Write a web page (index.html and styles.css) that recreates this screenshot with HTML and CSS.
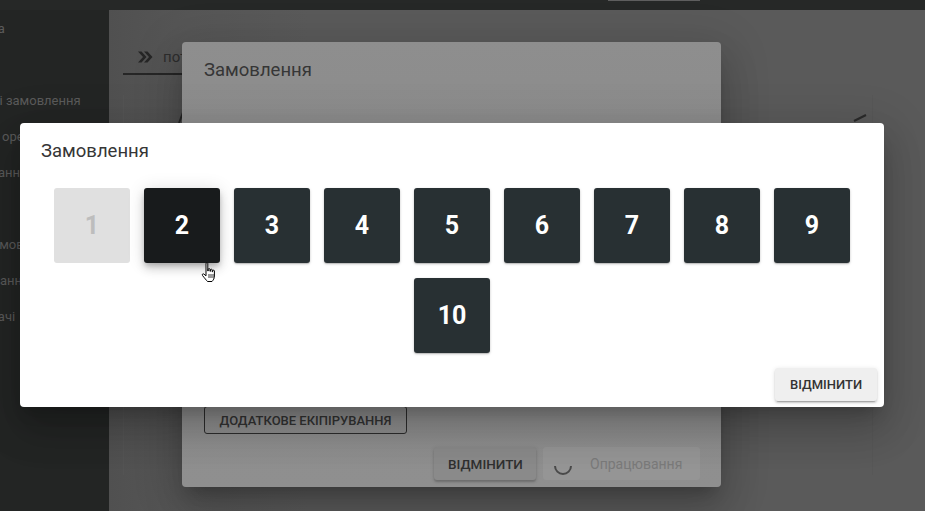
FILE: index.html
```html
<!DOCTYPE html>
<html lang="uk">
<head>
<meta charset="utf-8">
<title>Замовлення</title>
<link rel="stylesheet" href="styles.css">
</head>
<body>
<div class="topbar"><div class="topbar-tab"></div></div>
<div class="app">
  <nav class="sidebar">
    <div class="nav-item">Довідка</div>
    <div class="nav-item">Мапа</div>
    <div class="nav-item">Поточні замовлення</div>
    <div class="nav-item">Заявки оренди</div>
    <div class="nav-item">Скасування</div>
    <div class="nav-item">Водії</div>
    <div class="nav-item">Нові замовлення</div>
    <div class="nav-item">Планування</div>
    <div class="nav-item">Всі задачі</div>
  </nav>
  <main class="main">
    <div class="tabs">
      <div class="tab">
        <svg class="tab-icon" viewBox="0 0 16 14" width="16" height="14"><path d="M1 1.5 L6 7 L1 12.5 L4.5 12.5 L9.5 7 L4.5 1.5 Z M7 1.5 L12 7 L7 12.5 L10.5 12.5 L15.5 7 L10.5 1.5 Z" fill="#262626"/></svg>
        <span class="tab-label">поточні</span>
      </div>
    </div>
    <div class="card">
      <svg class="card-stroke left" width="12" height="26" viewBox="0 0 12 26"><path d="M1 26 L10 2" stroke="#2a2a2a" stroke-width="2" fill="none"/></svg>
      <svg class="card-stroke right" width="14" height="8" viewBox="0 0 14 8"><path d="M1 7 L13 1" stroke="#2a2a2a" stroke-width="2" fill="none"/></svg>
    </div>

    <section class="back-dialog">
      <h2 class="back-title">Замовлення</h2>
      <div class="back-body">
        <button class="outlined-btn">ДОДАТКОВЕ ЕКІПІРУВАННЯ</button>
      </div>
      <div class="back-actions">
        <button class="back-btn">ВІДМІНИТИ</button>
        <button class="back-btn disabled">
          <svg class="spinner" width="20" height="20" viewBox="0 0 20 20"><path d="M2 10 A8 8 0 0 0 18 10" stroke="#4a4a4a" stroke-width="2" fill="none"/></svg>
          <span>Опрацювання</span>
        </button>
      </div>
    </section>
  </main>
</div>

<section class="dialog">
  <h2 class="dialog-title">Замовлення</h2>
  <div class="tiles">
    <button class="tile disabled">1</button>
    <button class="tile hover">2</button>
    <button class="tile">3</button>
    <button class="tile">4</button>
    <button class="tile">5</button>
    <button class="tile">6</button>
    <button class="tile">7</button>
    <button class="tile">8</button>
    <button class="tile">9</button>
    <button class="tile">10</button>
  </div>
  <div class="dialog-actions">
    <button class="cancel-btn">ВІДМІНИТИ</button>
  </div>
</section>

<svg class="cursor" width="16" height="22" viewBox="0 0 16 22">
  <path d="M5 1.5 C5 0.7 6.8 0.7 6.8 1.5 L6.8 9 L7.2 9 L7.2 7.2 C7.2 6.4 9 6.4 9 7.2 L9 9.3 L9.4 9.3 L9.4 7.8 C9.4 7 11.2 7 11.2 7.8 L11.2 9.8 L11.6 9.8 L11.6 8.8 C11.6 8 13.4 8 13.4 8.8 L13.4 14 C13.4 16.5 12.3 18 11 19.5 L6.5 19.5 C5.3 18.2 3.5 16 1.5 13.5 C0.8 12.6 1.8 11.3 2.8 12 L5 13.8 Z" fill="#fff" stroke="#000" stroke-width="1"/>
  <path d="M8 12 L8 16 M10 12 L10 16 M12 12 L12 16" stroke="#000" stroke-width="0.8"/>
</svg>
</body>
</html>
```

FILE: styles.css
```css
* { box-sizing: border-box; }
html, body {
  margin: 0;
  padding: 0;
}
body {
  width: 925px;
  height: 511px;
  overflow: hidden;
  position: relative;
  font-family: Roboto, "Noto Sans", "Liberation Sans", sans-serif;
  background: #5a5a5a;
}
button {
  font-family: inherit;
  border: none;
  cursor: pointer;
}

.topbar {
  height: 10px;
  background: #262827;
  position: relative;
}
.topbar-tab {
  position: absolute;
  left: 608px;
  top: 0;
  width: 92px;
  height: 1px;
  background: #5e5e5e;
}

.app {
  display: flex;
  height: 501px;
}

.sidebar {
  width: 109px;
  flex: none;
  background: #232524;
  overflow: hidden;
  padding-top: 1px;
}
.nav-item {
  height: 36px;
  line-height: 36px;
  font-size: 13px;
  color: #5b5b5b;
  white-space: nowrap;
  margin-left: -45px;
}

.main {
  flex: 1;
  position: relative;
  background: linear-gradient(90deg, #505050 0, #565656 80px, #5a5a5a 200px);
  padding: 32px 0 0 14px;
}
.tabs {
  width: 180px;
  border-bottom: 2px solid #262626;
  height: 33px;
}
.tab {
  display: flex;
  align-items: center;
  gap: 10px;
  padding-left: 14px;
  height: 30px;
}
.tab-label {
  font-size: 15px;
  color: #2e2e2e;
}
.card {
  position: relative;
  margin-top: 20px;
  width: 750px;
  height: 380px;
  border-left: 1px solid #545454;
  border-right: 1px solid #575757;
}
.card-stroke {
  position: absolute;
}
.card-stroke.left { left: 54px; top: 2px; }
.card-stroke.right { left: 729px; top: 19px; }

.back-dialog {
  position: absolute;
  left: 73px;
  top: 32px;
  width: 539px;
  height: 445px;
  background: linear-gradient(180deg, #8e8e8e 0, #8b8b8b 120px, #8f8f8f 100%);
  border-radius: 4px;
  box-shadow: 0 11px 15px -7px rgba(0,0,0,.2), 0 24px 38px 3px rgba(0,0,0,.14), 0 9px 46px 8px rgba(0,0,0,.12);
  display: flex;
  flex-direction: column;
  padding: 18px 21px 7px 22px;
}
.back-title {
  margin: 0;
  font-size: 18.5px;
  font-weight: 400;
  line-height: 20px;
  color: #363636;
}
.back-body {
  flex: 1;
  display: flex;
  align-items: flex-end;
  padding-bottom: 13px;
}
.outlined-btn {
  background: transparent;
  border: 1px solid #2c2c2c;
  border-radius: 3px;
  height: 28px;
  width: 203px;
  font-size: 13px;
  font-weight: 500;
  color: #333;
  padding: 0;
}
.back-actions {
  display: flex;
  justify-content: flex-end;
  gap: 7px;
}
.back-btn {
  height: 33px;
  padding: 0 14px;
  border-radius: 3px;
  background: #8a8a8a;
  font-size: 13.5px;
  font-weight: 500;
  color: #303030;
  box-shadow: 0 2px 2px rgba(0,0,0,.18), 0 1px 4px rgba(0,0,0,.1);
  width: 102px;
}
.back-btn.disabled {
  width: 157px;
  background: #959595;
  box-shadow: none;
  color: #7a7a7a;
  font-weight: 400;
  font-size: 14px;
  display: flex;
  align-items: center;
  gap: 17px;
  padding: 0 12px 0 10px;
}
.spinner { margin-top: 4px; }

.dialog {
  position: absolute;
  left: 20px;
  top: 123px;
  width: 864px;
  height: 284px;
  background: #fff;
  border-radius: 4px;
  box-shadow: 0 11px 15px -7px rgba(0,0,0,.2), 0 24px 38px 3px rgba(0,0,0,.14), 0 9px 46px 8px rgba(0,0,0,.12);
  padding: 18px 0 6px;
  display: flex;
  flex-direction: column;
}
.dialog-title {
  margin: 0 0 27px 21px;
  font-size: 18.5px;
  font-weight: 400;
  line-height: 20px;
  color: #363636;
}
.tiles {
  display: flex;
  flex-wrap: wrap;
  justify-content: center;
  gap: 15px 14px;
  padding: 0 34px;
}
.tile {
  width: 76px;
  height: 75px;
  border-radius: 3px;
  background: #283033;
  color: #fff;
  font-size: 25px;
  font-weight: 700;
  box-shadow: 0 1px 3px rgba(0,0,0,.2), 0 1px 1px rgba(0,0,0,.14);
}
.tile.hover {
  background: #181b1c;
  box-shadow: 0 3px 5px -1px rgba(0,0,0,.2), 0 6px 10px 0 rgba(0,0,0,.14), 0 1px 18px 0 rgba(0,0,0,.12);
}
.tile.disabled {
  background: #e0e0e0;
  color: #bdbdbd;
  box-shadow: none;
}
.dialog-actions {
  margin-top: 15px;
  display: flex;
  justify-content: flex-end;
  padding-right: 7px;
}
.cancel-btn {
  width: 102px;
  height: 33px;
  border-radius: 3px;
  background: #efefef;
  font-size: 13px;
  font-weight: 500;
  color: #333;
  padding: 0;
  box-shadow: 0 3px 1px -2px rgba(0,0,0,.2), 0 2px 2px 0 rgba(0,0,0,.14), 0 1px 5px 0 rgba(0,0,0,.12);
}

.cursor {
  position: absolute;
  left: 201px;
  top: 262px;
}
```
